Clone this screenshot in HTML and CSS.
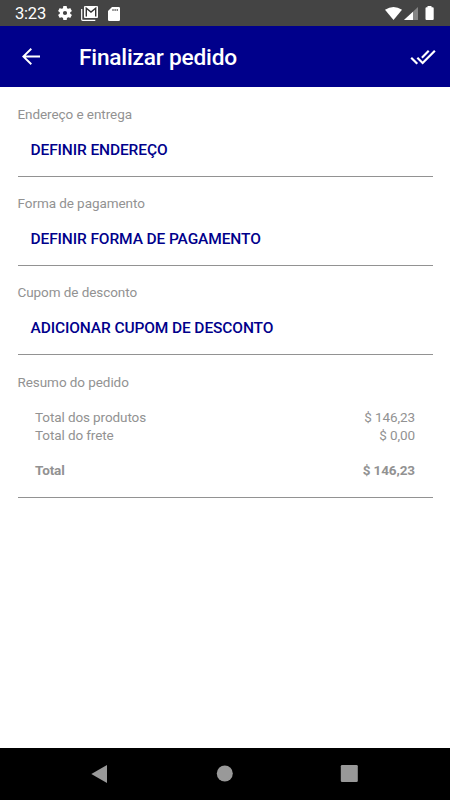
FILE: index.html
```html
<!DOCTYPE html>
<html lang="pt-BR">
<head>
<meta charset="utf-8">
<title>Finalizar pedido</title>
<link rel="stylesheet" href="styles.css">
</head>
<body>
<div class="screen">
  <div class="status">
    <span class="clock">3:23</span>
    <svg class="gear" viewBox="2 2 20 20"><path d="M19.43 12.98c.04-.32.07-.64.07-.98s-.03-.66-.07-.98l2.11-1.65c.19-.15.24-.42.12-.64l-2-3.46c-.12-.22-.39-.3-.61-.22l-2.49 1c-.52-.4-1.08-.73-1.69-.98l-.38-2.65A.49.49 0 0 0 14 2h-4c-.25 0-.46.18-.49.42l-.38 2.65c-.61.25-1.17.59-1.69.98l-2.49-1c-.23-.09-.49 0-.61.22l-2 3.46c-.13.22-.07.49.12.64l2.11 1.65c-.04.32-.07.65-.07.98s.03.66.07.98l-2.11 1.65c-.19.15-.24.42-.12.64l2 3.46c.12.22.39.3.61.22l2.49-1c.52.4 1.08.73 1.69.98l.38 2.65c.03.24.24.42.49.42h4c.25 0 .46-.18.49-.42l.38-2.65c.61-.25 1.17-.59 1.69-.98l2.49 1c.23.09.49 0 .61-.22l2-3.46c.12-.22.07-.49-.12-.64zM12 15a3 3 0 1 1 0-6 3 3 0 0 1 0 6z"/></svg>
    <svg class="mail" viewBox="0 0 17 15"><path d="M.7 3v10.300a1 1 0 0 0 1 1h12.600" fill="none" stroke="#fff" stroke-width="1.2"/><rect x="3" width="14" height="12" rx="1"/><path d="M5.300 10.500V2.300L10 6l4.700-3.700v8.200" fill="none" stroke="#333" stroke-width="1.4"/></svg>
    <svg class="card" viewBox="0 0 12 14"><path fill-rule="evenodd" d="M4 0h6.700A1.300 1.300 0 0 1 12 1.300v11.400a1.300 1.300 0 0 1-1.300 1.300H1.300A1.300 1.300 0 0 1 0 12.700V4zm.5 2v2h1V2zm2.100 0v2h1V2zm2.100 0v2h1V2z"/></svg>
    <svg class="signals" viewBox="0 0 50 16"><path d="M0 3.800Q8.500-1.800 17 3.800L8.500 14z"/><path d="M33 1v13H19z" fill="#858585"/><path d="M28 5.800V14h-9z"/><path d="M42.500 0h4v1.300h1.200q1 0 1 1v10.700q0 1-1 1h-6.200q-1 0-1-1V2.300q0-1 1-1h1z"/></svg>
  </div>
  <header class="bar">
    <svg class="back" viewBox="0 0 18 17"><path d="M9.300.8 1.300 8.500l8 7.700M1.500 8.500H18" fill="none" stroke="#fff" stroke-width="1.900"/></svg>
    <h1>Finalizar pedido</h1>
    <svg class="done" viewBox="0 0 24 24"><path d="M18 7l-1.410-1.410-6.340 6.340 1.410 1.410L18 7zm4.240-1.410L11.660 16.170 7.480 12l-1.410 1.410L11.660 19l12-12-1.420-1.410zM.41 13.410L6 19l1.410-1.410L1.830 12 .41 13.410z"/></svg>
  </header>
  <main>
    <section><h2>Endereço e entrega</h2><button>DEFINIR ENDEREÇO</button></section>
    <section><h2>Forma de pagamento</h2><button>DEFINIR FORMA DE PAGAMENTO</button></section>
    <section><h2>Cupom de desconto</h2><button>ADICIONAR CUPOM DE DESCONTO</button></section>
    <section class="summary">
      <h2>Resumo do pedido</h2>
      <div class="row"><span>Total dos produtos</span><span>$ 146,23</span></div>
      <div class="row"><span>Total do frete</span><span>$ 0,00</span></div>
      <div class="row total"><span>Total</span><span>$ 146,23</span></div>
    </section>
  </main>
  <nav>
    <svg viewBox="0 0 18 18"><path d="M17 0v18L1.300 9z"/></svg>
    <svg viewBox="0 0 18 18"><circle cx="9.800" cy="8.500" r="8"/></svg>
    <svg viewBox="0 0 18 18"><rect x=".8" y="0" width="17" height="17" rx="1.300"/></svg>
  </nav>
</div>
</body>
</html>
```
FILE: styles.css
```css
* { box-sizing: border-box; }
body { margin: 0; font-family: Roboto, sans-serif; background: #fff; }
.screen { width: 450px; height: 800px; display: flex; flex-direction: column; overflow: hidden; }
svg { display: block; flex: none; fill: #fff; }
.status { height: 26px; flex: none; display: flex; align-items: center; padding: 1px 15px 0; background: #444; color: #fff; }
.clock { width: 43px; font-size: 16.5px; line-height: 24px; letter-spacing: -.2px; }
.gear { width: 14px; height: 14px; margin-top: -1px; }
.mail { width: 17px; height: 15px; margin-left: 9px; }
.card { width: 12px; height: 14px; margin-left: 10px; }
.signals { width: 50px; height: 16px; margin: 1px 0 0 auto; }
.bar { height: 61px; flex: none; display: flex; align-items: center; padding: 0 14px 0 21.500px; background: #00008b; }
.back { width: 18px; height: 17px; }
h1 { margin: 3px 0 0 39.500px; color: #fff; font-size: 22.700px; line-height: 30px; font-weight: 500; letter-spacing: -.2px; white-space: nowrap; }
.done { width: 26px; height: 26px; margin-left: auto; }
main { flex: 1; padding: 0 17.500px; }
section { height: 89.170px; padding-top: 17px; border-bottom: 1px solid #929292; }
section:first-child { height: 89.600px; padding-top: 18px; }
h2 { margin: -1px 0 0; font-size: 13.500px; line-height: 20px; font-weight: 400; color: #929292; letter-spacing: -.07px; }
button { display: block; margin: 14px 0 0 13px; padding: 0; border: 0; background: none; color: #00008b; font: 500 15.500px/24px Roboto, sans-serif; letter-spacing: -.11px; white-space: nowrap; }
.summary { height: 143px; padding-top: 18px; }
.row { display: flex; justify-content: space-between; padding: 0 17.500px; font-size: 13.500px; line-height: 17.800px; color: #929292; letter-spacing: -.1px; }
h2 + .row { margin-top: 17px; }
.total { margin-top: 17.500px; font-weight: 700; }
nav { height: 52px; flex: none; display: flex; justify-content: space-between; padding: 17px 92px 0 90px; background: #000; }
nav svg { width: 18px; height: 18px; fill: #999; }
```
